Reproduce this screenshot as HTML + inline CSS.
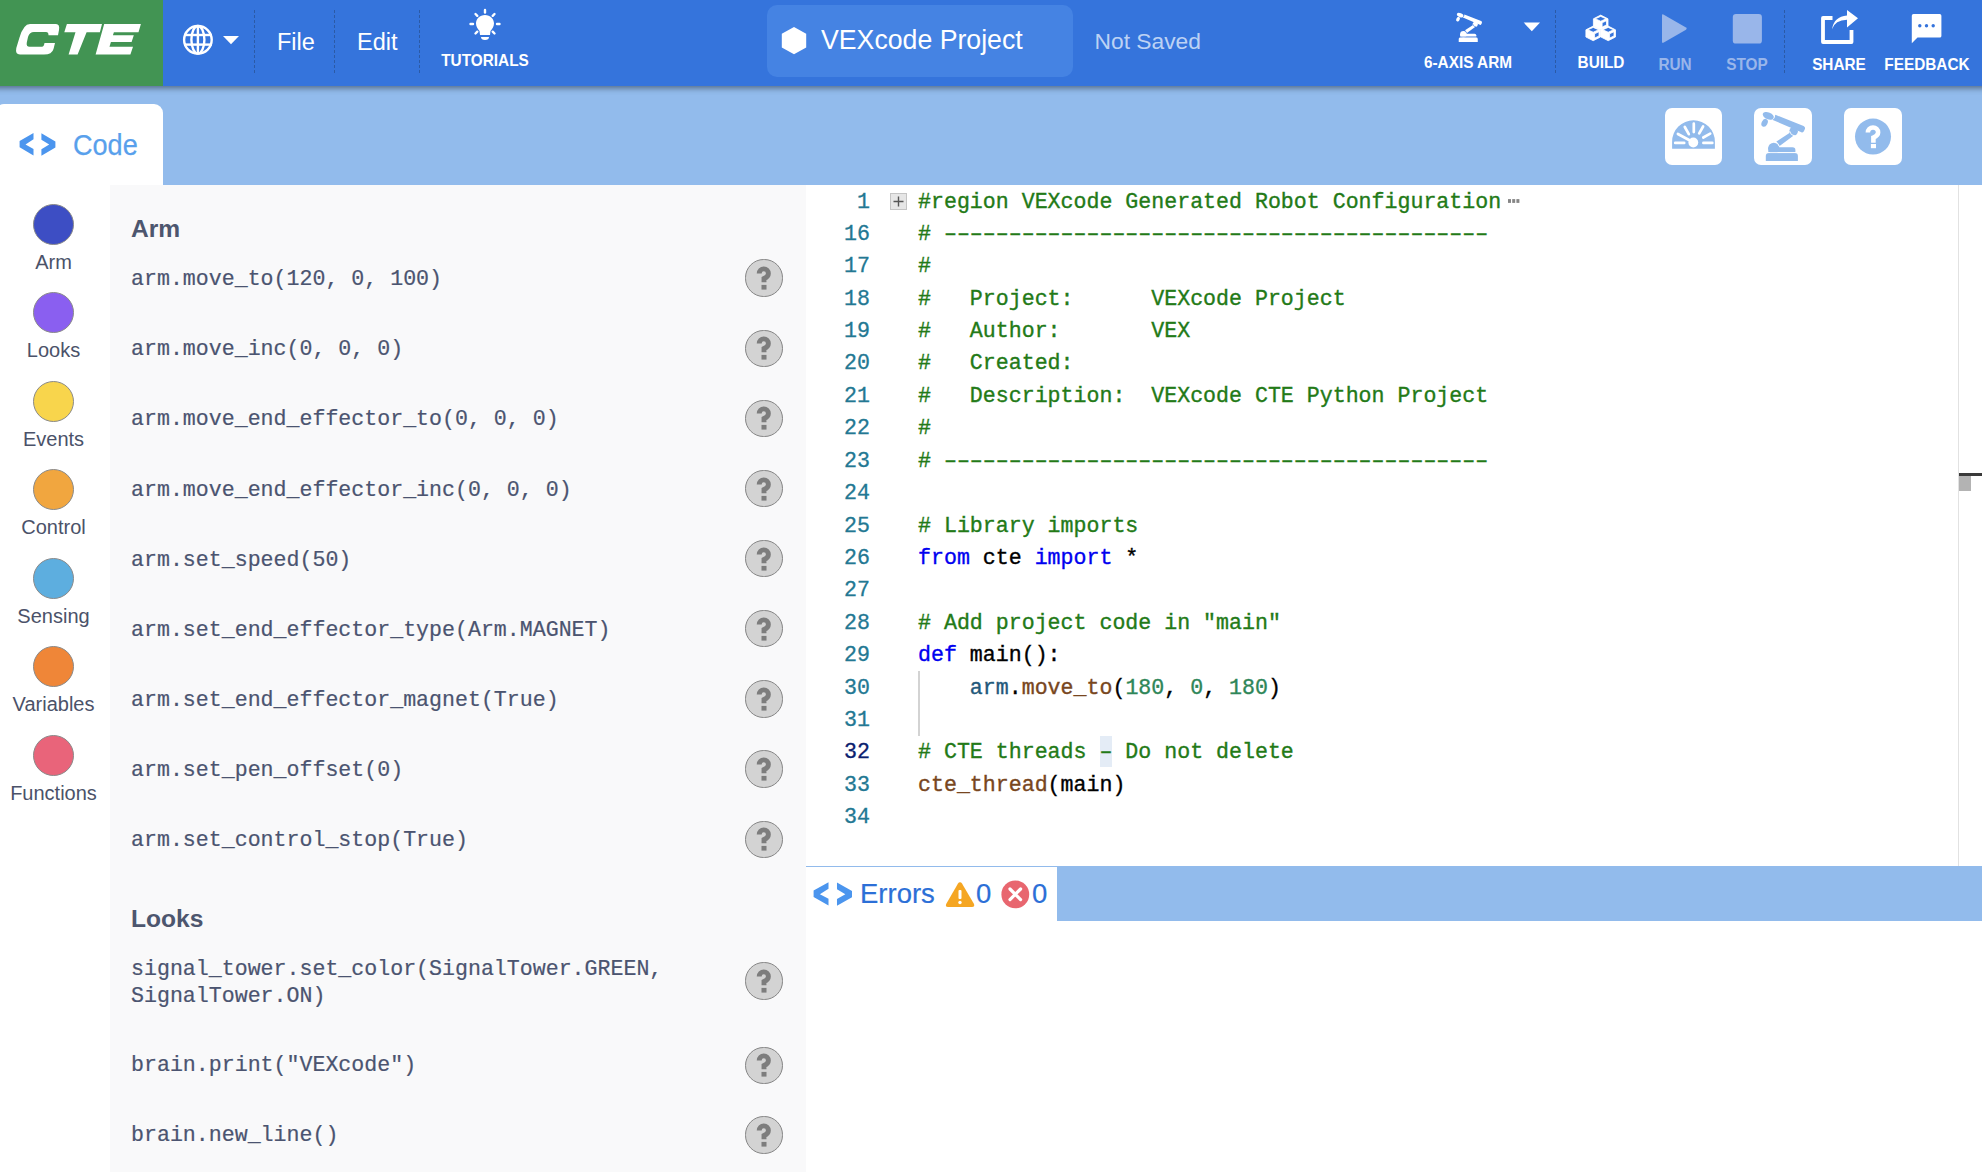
<!DOCTYPE html>
<html><head><meta charset="utf-8">
<style>
*{margin:0;padding:0;box-sizing:border-box}
html,body{width:1982px;height:1172px;overflow:hidden;background:#fff;font-family:"Liberation Sans",sans-serif}
.a{position:absolute}
#hdr{left:0;top:0;width:1982px;height:86px;background:#3574dc;z-index:5}
#hdrsh{left:-20px;top:0;width:2024px;height:86px;background:#3574dc;box-shadow:0 2px 6px rgba(0,0,0,.45);z-index:4}
#logo{left:0;top:0;width:163px;height:86px;background:#429453}
.sep{width:1.6px;background:repeating-linear-gradient(to bottom,#2b5aa6 0 3.2px,transparent 3.2px 5px);top:10px;height:63px}
.menu{color:#fff;font-size:23.5px;top:26.5px;line-height:30px}
.btnlbl{color:#fff;font-size:16.5px;font-weight:bold;line-height:20px;text-align:center;width:140px;transform:scaleX(.93);white-space:nowrap}
#band{left:0;top:86px;width:1982px;height:99px;background:#92bbec}
#codetab{left:-5px;top:104px;width:168px;height:81px;background:#fff;border-radius:9px 9px 0 0}
#cats{left:0;top:185px;width:110px;height:987px;background:#fff}
#panel{left:110px;top:185px;width:696px;height:987px;background:#f9f9fa}
.bbtn{top:108px;width:58px;height:57px;background:#fff;border-radius:7px}

.cat{left:33px;width:41px;height:41px;border-radius:50%;border:1px solid #8a8a8a}
.catl{left:0;width:107px;text-align:center;font-size:20px;line-height:22px;color:#4b5269}
.hd{left:131px;font-size:24.6px;font-weight:bold;color:#4d566e;line-height:24px}
.it{-webkit-text-stroke:0.2px #4b5470;left:131px;font-family:"Liberation Mono",monospace;font-size:21.6px;line-height:26px;color:#4b5470;white-space:pre}
.hq{left:745.3px;width:37.3px;height:37.3px;border-radius:50%;background:#d3d3d3;border:1.3px solid #858585}
.hq svg{position:absolute;left:-1.3px;top:-1.3px}

.ln{-webkit-text-stroke:0.3px currentColor;left:820px;width:50px;text-align:right;font-family:"Liberation Mono",monospace;font-size:21.6px;line-height:30px;color:#237893}
.ln.cur{color:#0b216f}
.cl{-webkit-text-stroke:0.35px currentColor;z-index:2;left:918px;font-family:"Liberation Mono",monospace;font-size:21.6px;line-height:30px;white-space:pre;color:#000}
.cl .c{color:#237a17;-webkit-text-stroke:0.35px #237a17}.cl .k{color:#0000f0;-webkit-text-stroke:0.35px #0000f0}.cl .f{color:#784620;-webkit-text-stroke:0.35px #784620}.cl .n{color:#2e8658;-webkit-text-stroke:0.35px #2e8658}.cl .v{color:#22587a;-webkit-text-stroke:0.35px #22587a}.cl .d{color:#000;-webkit-text-stroke:0.35px #000}
#editor{left:806px;top:185px;width:1176px;height:681px;background:#fff}
</style></head>
<body>
<div id="hdrsh" class="a"></div>
<div id="hdr" class="a">
  <div id="logo" class="a">
    <svg class="a" style="left:0;top:0" width="163" height="86" viewBox="0 0 163 86">
      <path fill="#fff" d="M30,24 L56,24 Q60,24 59,30 L58,35.3 L48.5,35.3 Q48.5,32 46,32 L34,32 Q29.5,32 28,37 L26.8,42.5 Q26,46.7 29.5,46.7 L42,46.7 Q44,46.7 44.5,43 L55,43 L53.5,49 Q52,54.5 44,54.5 L20,54.5 Q15,54.5 16.3,48 L19.5,37.5 Q23.5,24 30,24 Z"/>
      <path fill="#fff" d="M66.9,24 L102,24 L99.9,32.2 L86.6,32.2 L77.6,54.5 L68.6,54.5 L75.5,32.2 L64.3,32.2 Z"/>
      <path fill="#fff" d="M104.2,24 L140.9,24 L138.5,32.2 L113.9,32.2 L112.9,35.2 L133.8,35.2 L131.6,42 L110.9,42 L109.5,46.7 L133,46.7 L130.4,54.5 L95.6,54.5 Z"/>
    </svg>
  </div>
  <div class="a" style="left:163px;top:0;width:1819px;height:86px">
  </div>
  <svg class="a" style="left:180px;top:22px" width="62" height="36" viewBox="180 22 62 36">
    <g fill="none" stroke="#fff" stroke-width="2.4">
      <circle cx="197.9" cy="39.8" r="13.8"/>
      <ellipse cx="197.9" cy="39.8" rx="6.5" ry="13.8"/>
      <line x1="197.9" y1="26" x2="197.9" y2="53.6"/>
      <line x1="184" y1="35" x2="211.8" y2="35"/>
      <line x1="184" y1="44.6" x2="211.8" y2="44.6"/>
    </g>
    <path fill="#fff" d="M223,36 L239,36 L231,44.3 Z"/>
  </svg>
  <div class="a sep" style="left:253.6px"></div>
  <div class="a sep" style="left:333.6px"></div>
  <div class="a sep" style="left:418.6px"></div>
  <div class="a menu" style="left:277px">File</div>
  <div class="a menu" style="left:357px">Edit</div>
  <svg class="a" style="left:465px;top:6px" width="40" height="38" viewBox="465 6 40 38">
    <g stroke="#fff" stroke-width="2.4" stroke-linecap="round">
      <line x1="485" y1="10" x2="485" y2="12.5"/>
      <line x1="475.5" y1="14" x2="477.3" y2="15.8"/>
      <line x1="494.5" y1="14" x2="492.7" y2="15.8"/>
      <line x1="470.5" y1="24" x2="473" y2="24"/>
      <line x1="499.5" y1="24" x2="497" y2="24"/>
      <line x1="475.5" y1="33.5" x2="477.3" y2="31.7"/>
      <line x1="494.5" y1="33.5" x2="492.7" y2="31.7"/>
    </g>
    <path fill="#fff" d="M485,15 C479.8,15 476,19 476,23.6 C476,27 478,29 479.5,31 L480,35 L490,35 L490.5,31 C492,29 494,27 494,23.6 C494,19 490.2,15 485,15 Z"/>
    <path fill="#fff" d="M481,37 L489,37 Q489,40 485,40 Q481,40 481,37 Z"/>
  </svg>
  <div class="a btnlbl" style="left:414.8px;top:50.1px">TUTORIALS</div>

  <div class="a" style="left:767px;top:5px;width:306px;height:72px;background:#4583e3;border-radius:10px"></div>
  <svg class="a" style="left:781px;top:26px" width="26" height="30" viewBox="781 26 26 30">
    <path fill="#fff" d="M794,26.9 L806.2,33.7 L806.2,47.4 L794,54.2 L781.8,47.4 L781.8,33.7 Z"/>
  </svg>
  <div class="a" style="left:821px;top:24px;color:#fff;font-size:27px;line-height:32px;white-space:nowrap;transform:scaleX(.988);transform-origin:0 0">VEXcode Project</div>
  <div class="a" style="left:1094.5px;top:25.7px;color:#bcd2f4;font-size:22.8px;line-height:30px;white-space:nowrap">Not Saved</div>

  <svg class="a" style="left:1450px;top:8px" width="95" height="40" viewBox="1450 8 95 40">
    <g fill="#fff">
      </g><g transform="translate(1456 13) scale(0.593) translate(-1761.2 -112.3)"><g fill="#fff">
    <path d="M1765.8,156 Q1765.8,153.1 1768.8,153.1 L1795,153.1 Q1797.9,153.1 1797.9,156 L1797.9,161 L1765.8,161 Z"/>
    <path d="M1768.3,152.3 L1768.3,147.3 L1792.5,147.3 Q1795.4,147.3 1795.4,150 L1795.4,152.3 Z"/>
    <circle cx="1773.8" cy="148.3" r="5.6"/>
    <path d="M1776.4,141.6 L1790.6,132.3 L1793.4,135.8 L1779.6,146.1 Z"/>
    <path d="M1775.4,114.8 L1803.6,126 Q1805.6,127 1804.9,129 L1804,131 Q1803.2,133 1801.4,132.3 L1772.8,120 Z"/>
    <circle cx="1793.6" cy="131.2" r="4.3"/>
    <ellipse cx="1768.3" cy="115.9" rx="5.9" ry="3.4" transform="rotate(23 1768.3 115.9)"/>
    <ellipse cx="1764.6" cy="122.8" rx="2.9" ry="4.1" transform="rotate(28 1764.6 122.8)"/>
  </g>
  <g stroke="#3574dc" stroke-width="0.9" fill="none">
    <path d="M1773.5,118.8 Q1774.8,117.5 1774.6,115.2"/>
    <path d="M1789.5,131 Q1790.5,135.5 1795,136"/>
    <path d="M1775.2,141.6 Q1778.3,142.8 1779.2,146.3"/>
    <line x1="1766" y1="152.6" x2="1797.5" y2="152.6"/>
  </g>
  </g><g fill="#fff">
      <path d="M1523.7,22.6 L1540,22.6 L1531.8,31.3 Z"/>
    </g>
  </svg>
  <div class="a btnlbl" style="left:1398.0px;top:52.1px">6-AXIS ARM</div>
  <div class="a sep" style="left:1554.6px"></div>
  <svg class="a" style="left:1580px;top:10px" width="42" height="36" viewBox="1580 10 42 36">
    <g fill="#fff" fill-rule="evenodd" stroke-linejoin="round">
      <path transform="translate(1593.4 15.1)" d="M0,3.7 L7.3,0 L14.6,3.7 L14.6,10.9 L7.3,14.6 L0,10.9 Z M1.9,3.7 L7.3,1.3 L12.7,3.7 L7.3,6.1 Z M8.7,7.7 L13.1,5.6 L13.1,9.8 L8.7,12 Z" stroke="#fff" stroke-width="0.8"/>
      <path transform="translate(1585.9 26.1)" d="M0,3.7 L7.3,0 L14.6,3.7 L14.6,10.9 L7.3,14.6 L0,10.9 Z M1.9,3.7 L7.3,1.3 L12.7,3.7 L7.3,6.1 Z M8.7,7.7 L13.1,5.6 L13.1,9.8 L8.7,12 Z" stroke="#fff" stroke-width="0.8"/>
      <path transform="translate(1600.9 26.1)" d="M0,3.7 L7.3,0 L14.6,3.7 L14.6,10.9 L7.3,14.6 L0,10.9 Z M1.9,3.7 L7.3,1.3 L12.7,3.7 L7.3,6.1 Z M8.7,7.7 L13.1,5.6 L13.1,9.8 L8.7,12 Z" stroke="#fff" stroke-width="0.8"/>
    </g>
  </svg>
  <div class="a btnlbl" style="left:1530.9px;top:52.1px">BUILD</div>
  <svg class="a" style="left:1655px;top:10px" width="115" height="38" viewBox="1655 10 115 38">
    <path fill="#99b6ea" d="M1662,15.5 Q1662,13.7 1663.8,14.7 L1686,27.5 Q1687.5,28.6 1686,29.7 L1663.8,42.6 Q1662,43.6 1662,41.8 Z"/>
    <rect x="1732.8" y="13.9" width="29.1" height="29.7" rx="3.2" fill="#99b6ea"/>
  </svg>
  <div class="a btnlbl" style="left:1604.5px;top:53.8px;color:#99b6ea">RUN</div>
  <div class="a btnlbl" style="left:1677.2px;top:53.8px;color:#99b6ea">STOP</div>
  <div class="a sep" style="left:1783.6px"></div>
  <svg class="a" style="left:1815px;top:6px" width="60" height="42" viewBox="1815 6 60 42">
    <path fill="none" stroke="#fff" stroke-width="3.8" stroke-linejoin="round" d="M1832.5,18 L1823,18 L1823,42 L1851.5,42 L1851.5,30"/>
    <path fill="#fff" d="M1832,29.3 Q1835,20 1847,19.8 L1847,27.5 L1858,18.3 L1847,10 L1847,15.5 Q1834,16.5 1832,29.3 Z"/>
    <path fill="#fff" d="M1911.8,15.5 Q1911.8,14 1913.5,14 L1939.7,14 Q1941.4,14 1941.4,15.7 L1941.4,36 Q1941.4,37.6 1939.7,37.6 L1917.5,37.6 L1911.8,43.2 Z"/>
  </svg>
  <div class="a btnlbl" style="left:1769.0px;top:54.1px">SHARE</div>
  <svg class="a" style="left:1905px;top:10px" width="40" height="36" viewBox="1905 10 40 36">
    <path fill="#fff" d="M1911.8,15.7 Q1911.8,14 1913.5,14 L1939.7,14 Q1941.4,14 1941.4,15.7 L1941.4,35.9 Q1941.4,37.6 1939.7,37.6 L1917.5,37.6 L1911.8,43.2 Z"/>
    <g fill="#3574dc"><circle cx="1919.8" cy="25.7" r="1.7"/><circle cx="1926.5" cy="25.7" r="1.7"/><circle cx="1933.2" cy="25.7" r="1.7"/></g>
  </svg>
  <div class="a btnlbl" style="left:1857.4px;top:53.8px">FEEDBACK</div>

</div>
<div id="band" class="a"></div>
<div id="codetab" class="a"></div>
<div class="a bbtn" style="left:1665px;width:57px"></div>
<div class="a bbtn" style="left:1754px"></div>
<div class="a bbtn" style="left:1844px"></div>
<svg class="a" style="left:1660px;top:100px" width="250" height="72" viewBox="1660 100 250 72">
  <path fill="#92bbec" d="M1672.1,148.8 L1672.1,141.7 A21.4,21.4 0 0 1 1714.9,141.7 L1714.9,148.8 Z"/>
  <g stroke="#fff" stroke-width="2.7" stroke-linecap="round">
    <line x1="1675.2" y1="142.9" x2="1684.2" y2="142.9"/>
    <line x1="1703.4" y1="142.9" x2="1712.3" y2="142.9"/>
    <line x1="1693.8" y1="123.7" x2="1693.8" y2="132.1"/>
    <line x1="1684.8" y1="127" x2="1688.8" y2="134.2"/>
    <line x1="1703.1" y1="126.5" x2="1699.2" y2="133.3"/>
    <line x1="1710.2" y1="133.6" x2="1703.3" y2="137.5"/>
    <line x1="1677.9" y1="134" x2="1693.2" y2="142.3"/>
  </g>
  <circle cx="1693.3" cy="142.5" r="4.9" fill="#fff"/>
  <g fill="#92bbec">
    <path d="M1765.8,156 Q1765.8,153.1 1768.8,153.1 L1795,153.1 Q1797.9,153.1 1797.9,156 L1797.9,161 L1765.8,161 Z"/>
    <path d="M1768.3,152.3 L1768.3,147.3 L1792.5,147.3 Q1795.4,147.3 1795.4,150 L1795.4,152.3 Z"/>
    <circle cx="1773.8" cy="148.3" r="5.6"/>
    <path d="M1776.4,141.6 L1790.6,132.3 L1793.4,135.8 L1779.6,146.1 Z"/>
    <path d="M1775.4,114.8 L1803.6,126 Q1805.6,127 1804.9,129 L1804,131 Q1803.2,133 1801.4,132.3 L1772.8,120 Z"/>
    <circle cx="1793.6" cy="131.2" r="4.3"/>
    <ellipse cx="1768.3" cy="115.9" rx="5.9" ry="3.4" transform="rotate(23 1768.3 115.9)"/>
    <ellipse cx="1764.6" cy="122.8" rx="2.9" ry="4.1" transform="rotate(28 1764.6 122.8)"/>
  </g>
  <g stroke="#fff" stroke-width="0.9" fill="none">
    <path d="M1773.5,118.8 Q1774.8,117.5 1774.6,115.2"/>
    <path d="M1789.5,131 Q1790.5,135.5 1795,136"/>
    <path d="M1775.2,141.6 Q1778.3,142.8 1779.2,146.3"/>
    <line x1="1766" y1="152.6" x2="1797.5" y2="152.6"/>
  </g>
  <circle cx="1873" cy="136.6" r="18" fill="#92bbec"/>
  <path d="M1867.9,132.6 A5.1,5.1 0 1 1 1878.1,132.6 Q1878.1,135.6 1873.4,137.6 L1873.4,142.8" fill="none" stroke="#fff" stroke-width="4.6"/><rect x="1870.9" y="144" width="5.1" height="4.2" fill="#fff"/>
</svg>
<div class="a" style="left:0;top:104px;width:163px;height:81px">
  <svg class="a" style="left:15px;top:128px;top:24px" width="46" height="36" viewBox="15 128 46 36">
    <path fill="#4b95ee" d="M33.5,133 L33.5,139.3 L25.5,144.5 L33.5,148.9 L33.5,155.4 L19.6,147.2 L19.6,141 Z M41.4,133.2 L41.4,139.7 L49.2,144.5 L41.4,149.2 L41.4,155.7 L55.4,147.4 L55.4,141.4 Z"/>
  </svg>
  <div class="a" style="left:72.5px;top:25px;font-size:29px;line-height:32px;color:#58a0ec;transform:scaleX(.934);transform-origin:0 0;-webkit-text-stroke:0.25px #58a0ec">Code</div>
</div>

<div id="cats" class="a"></div>
<div class="a cat" style="top:203.5px;background:#3d4ec4"></div>
<div class="a catl" style="top:250.6px">Arm</div>
<div class="a cat" style="top:292.1px;background:#8a5ff0"></div>
<div class="a catl" style="top:339.2px">Looks</div>
<div class="a cat" style="top:380.6px;background:#f8d54c"></div>
<div class="a catl" style="top:427.7px">Events</div>
<div class="a cat" style="top:469.1px;background:#f1a63f"></div>
<div class="a catl" style="top:516.2px">Control</div>
<div class="a cat" style="top:557.7px;background:#5daedf"></div>
<div class="a catl" style="top:604.8px">Sensing</div>
<div class="a cat" style="top:646.2px;background:#ef8638"></div>
<div class="a catl" style="top:693.4px">Variables</div>
<div class="a cat" style="top:734.8px;background:#e9647a"></div>
<div class="a catl" style="top:781.9px">Functions</div>

<div id="panel" class="a"></div>
<div class="a hd" style="top:216.5px">Arm</div>
<div class="a it" style="top:266.0px">arm.move_to(120, 0, 100)</div>
<div class="a hq" style="top:259.4px"><svg width="38" height="38" viewBox="0 0 38 38"><path d="M14.2,14.5 A4.6,4.6 0 1 1 23.4,14.5 Q23.4,17.6 19,19.6 L19,23.2" fill="none" stroke="#7d7d7d" stroke-width="4.9"/><rect x="16.5" y="25.9" width="5" height="4.7" fill="#7d7d7d"/></svg></div>
<div class="a it" style="top:336.1px">arm.move_inc(0, 0, 0)</div>
<div class="a hq" style="top:329.5px"><svg width="38" height="38" viewBox="0 0 38 38"><path d="M14.2,14.5 A4.6,4.6 0 1 1 23.4,14.5 Q23.4,17.6 19,19.6 L19,23.2" fill="none" stroke="#7d7d7d" stroke-width="4.9"/><rect x="16.5" y="25.9" width="5" height="4.7" fill="#7d7d7d"/></svg></div>
<div class="a it" style="top:406.3px">arm.move_end_effector_to(0, 0, 0)</div>
<div class="a hq" style="top:399.7px"><svg width="38" height="38" viewBox="0 0 38 38"><path d="M14.2,14.5 A4.6,4.6 0 1 1 23.4,14.5 Q23.4,17.6 19,19.6 L19,23.2" fill="none" stroke="#7d7d7d" stroke-width="4.9"/><rect x="16.5" y="25.9" width="5" height="4.7" fill="#7d7d7d"/></svg></div>
<div class="a it" style="top:476.5px">arm.move_end_effector_inc(0, 0, 0)</div>
<div class="a hq" style="top:469.8px"><svg width="38" height="38" viewBox="0 0 38 38"><path d="M14.2,14.5 A4.6,4.6 0 1 1 23.4,14.5 Q23.4,17.6 19,19.6 L19,23.2" fill="none" stroke="#7d7d7d" stroke-width="4.9"/><rect x="16.5" y="25.9" width="5" height="4.7" fill="#7d7d7d"/></svg></div>
<div class="a it" style="top:546.6px">arm.set_speed(50)</div>
<div class="a hq" style="top:540.0px"><svg width="38" height="38" viewBox="0 0 38 38"><path d="M14.2,14.5 A4.6,4.6 0 1 1 23.4,14.5 Q23.4,17.6 19,19.6 L19,23.2" fill="none" stroke="#7d7d7d" stroke-width="4.9"/><rect x="16.5" y="25.9" width="5" height="4.7" fill="#7d7d7d"/></svg></div>
<div class="a it" style="top:616.8px">arm.set_end_effector_type(Arm.MAGNET)</div>
<div class="a hq" style="top:610.1px"><svg width="38" height="38" viewBox="0 0 38 38"><path d="M14.2,14.5 A4.6,4.6 0 1 1 23.4,14.5 Q23.4,17.6 19,19.6 L19,23.2" fill="none" stroke="#7d7d7d" stroke-width="4.9"/><rect x="16.5" y="25.9" width="5" height="4.7" fill="#7d7d7d"/></svg></div>
<div class="a it" style="top:686.9px">arm.set_end_effector_magnet(True)</div>
<div class="a hq" style="top:680.3px"><svg width="38" height="38" viewBox="0 0 38 38"><path d="M14.2,14.5 A4.6,4.6 0 1 1 23.4,14.5 Q23.4,17.6 19,19.6 L19,23.2" fill="none" stroke="#7d7d7d" stroke-width="4.9"/><rect x="16.5" y="25.9" width="5" height="4.7" fill="#7d7d7d"/></svg></div>
<div class="a it" style="top:757.1px">arm.set_pen_offset(0)</div>
<div class="a hq" style="top:750.4px"><svg width="38" height="38" viewBox="0 0 38 38"><path d="M14.2,14.5 A4.6,4.6 0 1 1 23.4,14.5 Q23.4,17.6 19,19.6 L19,23.2" fill="none" stroke="#7d7d7d" stroke-width="4.9"/><rect x="16.5" y="25.9" width="5" height="4.7" fill="#7d7d7d"/></svg></div>
<div class="a it" style="top:827.2px">arm.set_control_stop(True)</div>
<div class="a hq" style="top:820.6px"><svg width="38" height="38" viewBox="0 0 38 38"><path d="M14.2,14.5 A4.6,4.6 0 1 1 23.4,14.5 Q23.4,17.6 19,19.6 L19,23.2" fill="none" stroke="#7d7d7d" stroke-width="4.9"/><rect x="16.5" y="25.9" width="5" height="4.7" fill="#7d7d7d"/></svg></div>
<div class="a hd" style="top:907.2px">Looks</div>
<div class="a it" style="top:956.2px;line-height:26.5px">signal_tower.set_color(SignalTower.GREEN,<br>SignalTower.ON)</div>
<div class="a hq" style="top:962.4px"><svg width="38" height="38" viewBox="0 0 38 38"><path d="M14.2,14.5 A4.6,4.6 0 1 1 23.4,14.5 Q23.4,17.6 19,19.6 L19,23.2" fill="none" stroke="#7d7d7d" stroke-width="4.9"/><rect x="16.5" y="25.9" width="5" height="4.7" fill="#7d7d7d"/></svg></div>
<div class="a it" style="top:1051.8px">brain.print("VEXcode")</div>
<div class="a hq" style="top:1046.5px"><svg width="38" height="38" viewBox="0 0 38 38"><path d="M14.2,14.5 A4.6,4.6 0 1 1 23.4,14.5 Q23.4,17.6 19,19.6 L19,23.2" fill="none" stroke="#7d7d7d" stroke-width="4.9"/><rect x="16.5" y="25.9" width="5" height="4.7" fill="#7d7d7d"/></svg></div>
<div class="a it" style="top:1122.3px">brain.new_line()</div>
<div class="a hq" style="top:1116.3px"><svg width="38" height="38" viewBox="0 0 38 38"><path d="M14.2,14.5 A4.6,4.6 0 1 1 23.4,14.5 Q23.4,17.6 19,19.6 L19,23.2" fill="none" stroke="#7d7d7d" stroke-width="4.9"/><rect x="16.5" y="25.9" width="5" height="4.7" fill="#7d7d7d"/></svg></div>

<div id="editor" class="a"></div>
<div class="a ln" style="top:186.90px">1</div><div class="a cl" style="top:186.90px"><span class="c">#region VEXcode Generated Robot Configuration</span></div>
<div class="a ln" style="top:218.72px">16</div><div class="a cl" style="top:218.72px"><span class="c"># ––––––––––––––––––––––––––––––––––––––––––</span></div>
<div class="a ln" style="top:251.14px">17</div><div class="a cl" style="top:251.14px"><span class="c">#</span></div>
<div class="a ln" style="top:283.56px">18</div><div class="a cl" style="top:283.56px"><span class="c">#   Project:      VEXcode Project</span></div>
<div class="a ln" style="top:315.98px">19</div><div class="a cl" style="top:315.98px"><span class="c">#   Author:       VEX</span></div>
<div class="a ln" style="top:348.40px">20</div><div class="a cl" style="top:348.40px"><span class="c">#   Created:</span></div>
<div class="a ln" style="top:380.82px">21</div><div class="a cl" style="top:380.82px"><span class="c">#   Description:  VEXcode CTE Python Project</span></div>
<div class="a ln" style="top:413.24px">22</div><div class="a cl" style="top:413.24px"><span class="c">#</span></div>
<div class="a ln" style="top:445.66px">23</div><div class="a cl" style="top:445.66px"><span class="c"># ––––––––––––––––––––––––––––––––––––––––––</span></div>
<div class="a ln" style="top:478.08px">24</div>
<div class="a ln" style="top:510.50px">25</div><div class="a cl" style="top:510.50px"><span class="c"># Library imports</span></div>
<div class="a ln" style="top:542.92px">26</div><div class="a cl" style="top:542.92px"><span class="k">from</span><span class="d"> cte </span><span class="k">import</span><span class="d"> *</span></div>
<div class="a ln" style="top:575.34px">27</div>
<div class="a ln" style="top:607.76px">28</div><div class="a cl" style="top:607.76px"><span class="c"># Add project code in &quot;main&quot;</span></div>
<div class="a ln" style="top:640.18px">29</div><div class="a cl" style="top:640.18px"><span class="k">def</span><span class="d"> main():</span></div>
<div class="a ln" style="top:672.60px">30</div><div class="a cl" style="top:672.60px"><span class="d">    </span><span class="v">arm</span><span class="d">.</span><span class="f">move_to</span><span class="d">(</span><span class="n">180</span><span class="d">, </span><span class="n">0</span><span class="d">, </span><span class="n">180</span><span class="d">)</span></div>
<div class="a ln" style="top:705.02px">31</div>
<div class="a ln cur" style="top:737.44px">32</div><div class="a cl" style="top:737.44px"><span class="c"># CTE threads – Do not delete</span></div>
<div class="a ln" style="top:769.86px">33</div><div class="a cl" style="top:769.86px"><span class="f">cte_thread</span><span class="d">(main)</span></div>
<div class="a ln" style="top:802.28px">34</div>
<div class="a" style="left:890.2px;top:193.1px;width:16.6px;height:16.8px;background:#e6e6e6;border:1px solid #c4c4c4"></div>
<svg class="a" style="left:890px;top:193px" width="17" height="17" viewBox="890 193 17 17"><path d="M898.5,196.5 L898.5,206.5 M893.5,201.5 L903.5,201.5" stroke="#555" stroke-width="1.4"/></svg>
<svg class="a" style="left:1505px;top:195px" width="18" height="10" viewBox="1505 195 18 10"><g fill="#858585"><rect x="1508" y="199.1" width="3" height="3.8"/><rect x="1512.2" y="199.1" width="3" height="3.8"/><rect x="1516.4" y="199.1" width="3" height="3.8"/></g></svg>
<div class="a" style="left:918.4px;top:671px;width:1.3px;height:64.5px;background:#d3d3d3"></div>
<div class="a" style="left:1099.7px;top:736.3px;width:12.1px;height:31px;background:#e4ecf6"></div>
<div class="a" style="left:1958px;top:185px;width:1px;height:681px;background:#e2e2e2"></div>
<div class="a" style="left:1958.6px;top:473.1px;width:23.4px;height:2.7px;background:#3a3a3a"></div>
<div class="a" style="left:1958.6px;top:475.8px;width:12px;height:15.1px;background:#b3b3b3"></div>


<div class="a" style="left:806px;top:865.5px;width:1176px;height:1px;background:#92bbec"></div>
<div class="a" style="left:1057px;top:866px;width:925px;height:55px;background:#92bbec"></div>
<svg class="a" style="left:810px;top:878px" width="240" height="34" viewBox="810 878 240 34">
  <g transform="translate(813.6 882.2) scale(1.0726 1.0396) translate(-19.6 -133)"><path fill="#4b95ee" d="M33.5,133 L33.5,139.3 L25.5,144.5 L33.5,148.9 L33.5,155.4 L19.6,147.2 L19.6,141 Z M41.4,133.2 L41.4,139.7 L49.2,144.5 L41.4,149.2 L41.4,155.7 L55.4,147.4 L55.4,141.4 Z"/></g>
  <path fill="#f5a623" d="M960,882.2 Q961.2,882.2 962,883.5 L974,904 Q975,907 972,907 L948,907 Q945,907 946.2,904 L958,883.5 Q958.8,882.2 960,882.2 Z"/>
  <rect x="958.5" y="890" width="3" height="9" fill="#fff" rx="1"/>
  <circle cx="960" cy="902.5" r="1.7" fill="#fff"/>
  <circle cx="1015.3" cy="894.4" r="13.9" fill="#e8666f"/>
  <path d="M1010,889 L1020.6,899.6 M1020.6,889 L1010,899.6" stroke="#fff" stroke-width="3.2" stroke-linecap="round"/>
</svg>
<div class="a" style="left:860px;top:878px;font-size:27.5px;line-height:32px;color:#2c6fd7;-webkit-text-stroke:0.2px #2c6fd7">Errors</div>
<div class="a" style="left:976px;top:878px;font-size:27.5px;line-height:32px;color:#2c6fd7;-webkit-text-stroke:0.2px #2c6fd7">0</div>
<div class="a" style="left:1032px;top:878px;font-size:27.5px;line-height:32px;color:#2c6fd7;-webkit-text-stroke:0.2px #2c6fd7">0</div>
</body></html>
